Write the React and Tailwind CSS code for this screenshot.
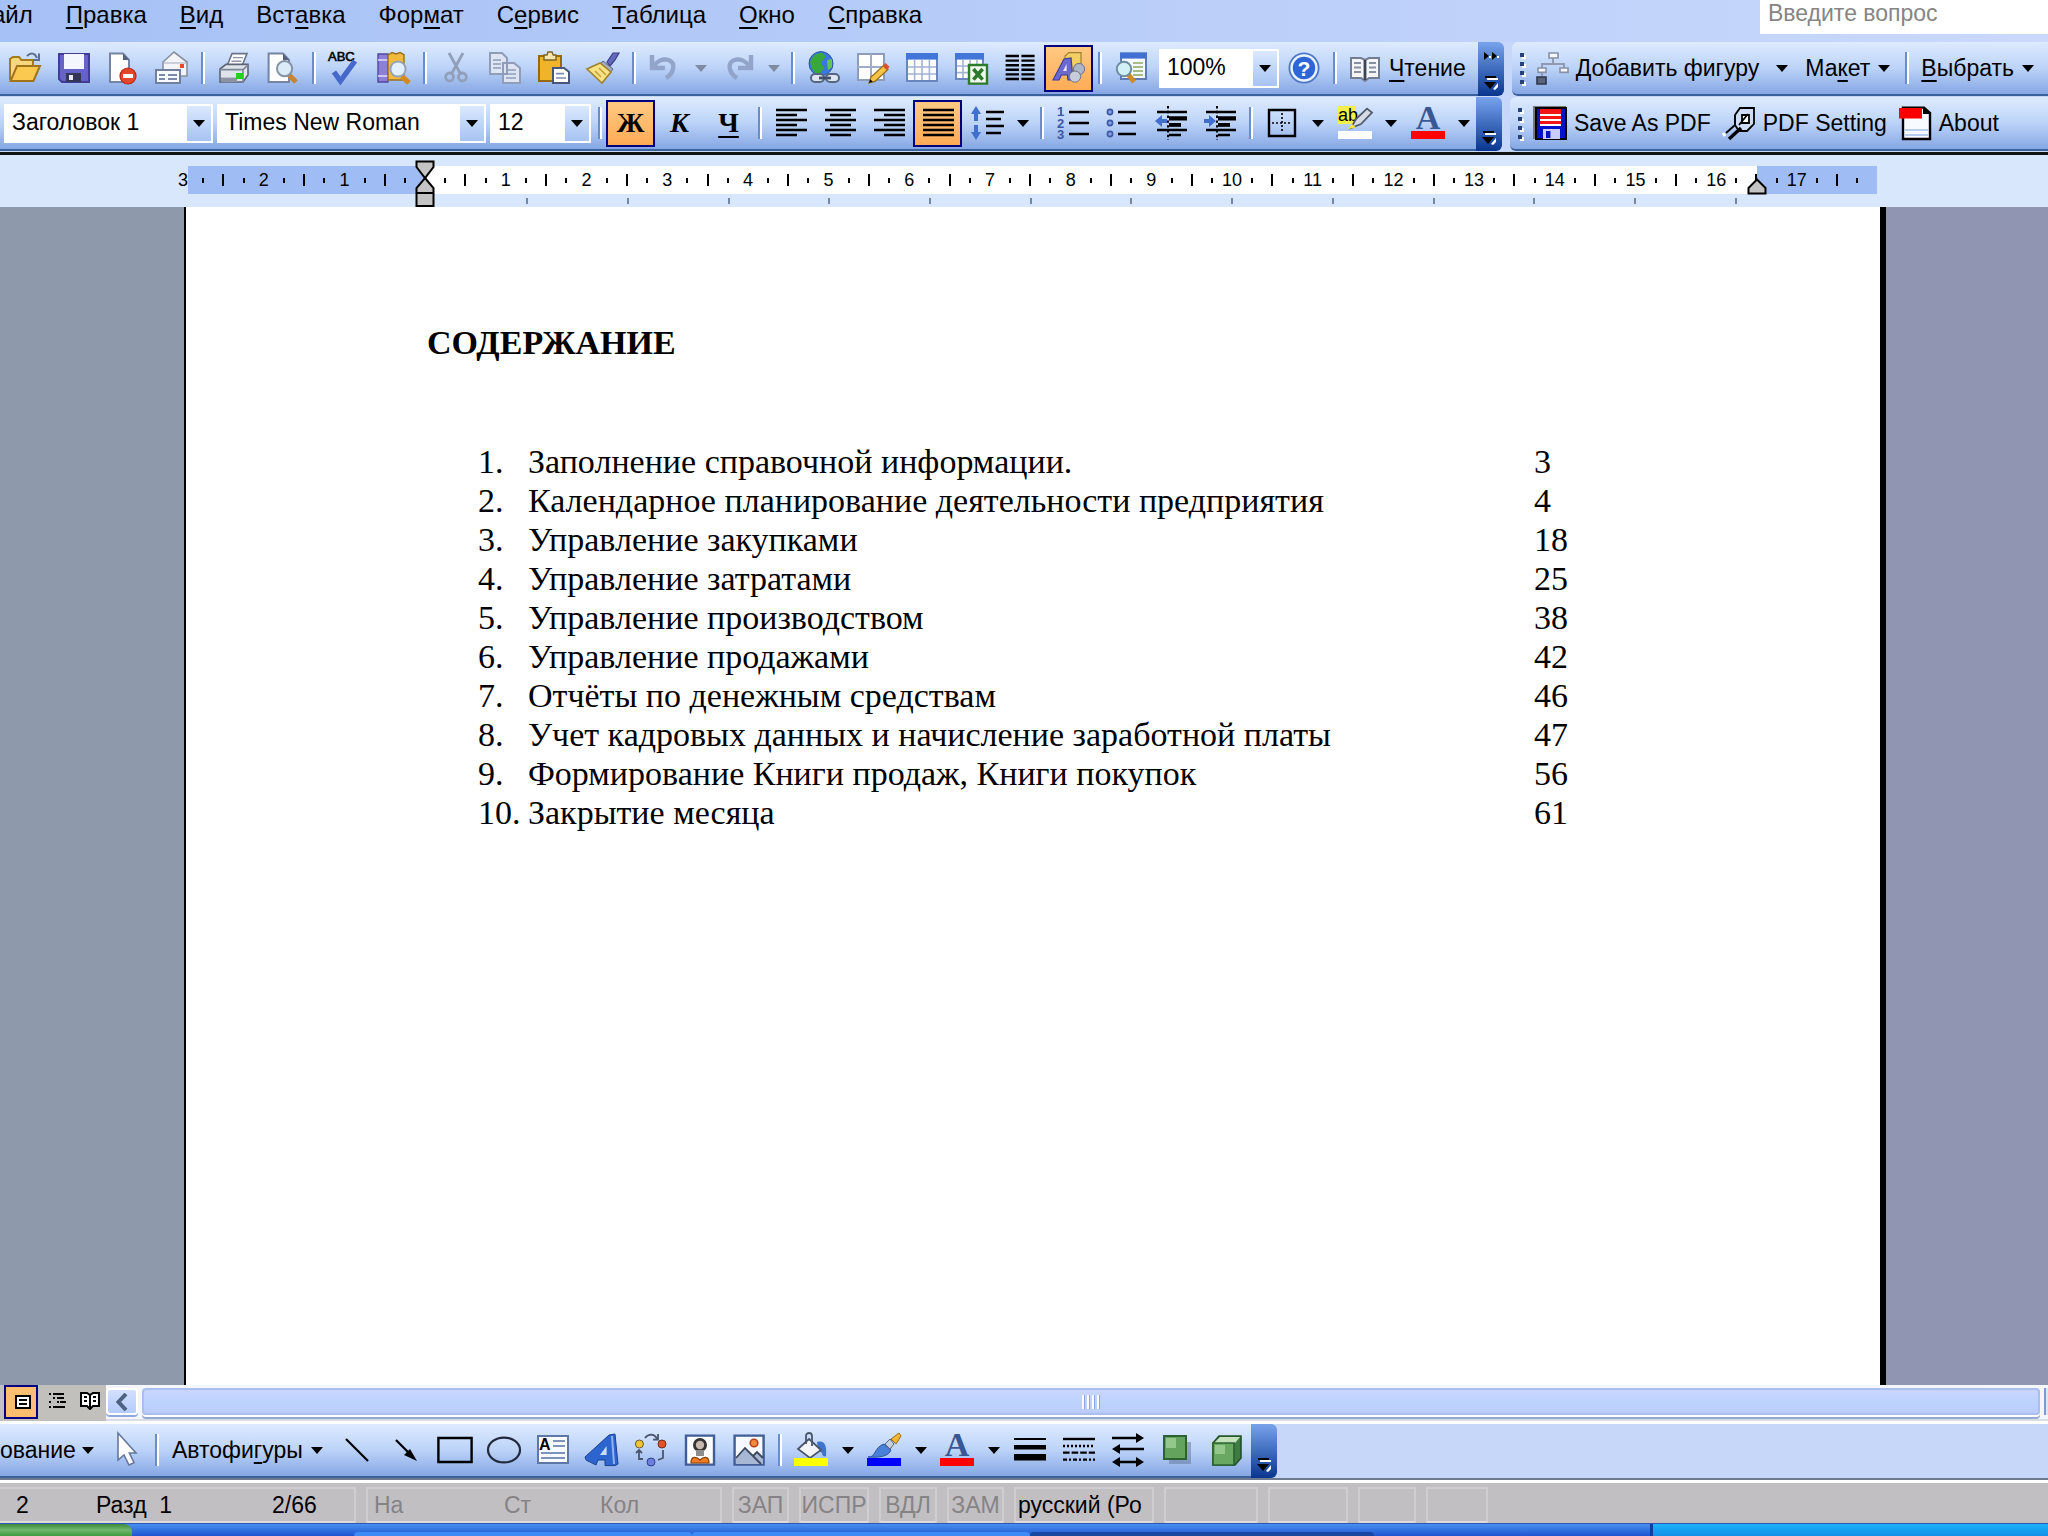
import { useState } from "react";

// all toolbar icons are drawn on a 16x16 grid
const icons = {
  open: (
    <>
      <path d="M.5 14V3.5L2 2.5h3L6.200 4H12v3" fill="#f6d680" stroke="#a57a18" />
      <path d="M.8 14.5 4 7h11.5l-3.300 7.5z" fill="#fbc850" stroke="#a0741a" />
      <path d="M9 2c2-2 4-1.5 5 1M15 .8V4h-3" fill="none" stroke="#5b718f" />
    </>
  ),
  save: (
    <>
      <path d="M.5 1h15v14H2L.5 13.5z" fill="#6663c8" stroke="#403c98" />
      <path d="M3 1h10v7.5H3z" fill="#f4f6fd" />
      <path d="M4 10.5h7.5V15H4z" fill="#333657" />
      <path d="M5.5 11.5h2V14h-2z" fill="#e8eaf5" />
    </>
  ),
  permission: (
    <>
      <path d="M1.5.8H8L11 4v11H1.5z" fill="#fff" stroke="#7584a4" />
      <path d="M8 .8V4h3z" fill="#54617c" />
      <circle cx="10.5" cy="12" r="4" fill="#e4462b" stroke="#b42b16" strokeWidth=".6" />
      <path d="M8 11h5v2H8z" fill="#fff" />
    </>
  ),
  mail: (
    <>
      <path d="M3.5 5 9 0l6.5 5v7h-12z" fill="#f3f4f7" stroke="#8891a2" strokeWidth=".8" />
      <path d="M4 5.5h11" stroke="#b8bfcc" strokeWidth=".7" />
      <path d="M12 6h2v2h-2z" fill="#e8482c" />
      <path d="M0 9h12v6.5H0z" fill="#f7faff" stroke="#6f7f9c" />
      <path d="M1.5 11.5h3M1.5 13.5h3M6 11.5h4.5M6 13.5h4.5" stroke="#7c8aa8" strokeWidth=".9" />
    </>
  ),
  print: (
    <>
      <path d="M4.5 7 7 .8h7.5L12 7z" fill="#fff" stroke="#6b7486" strokeWidth=".8" />
      <path d="M7.5 2.8h5M6.700 4.600h5" stroke="#8b94a5" strokeWidth=".7" />
      <path d="m1 8.5 3-2.3h11v5.3L12.5 15H1z" fill="#dfe3ea" stroke="#5c6576" strokeWidth=".8" />
      <path d="M1 8.8h11.5L15 6.5M12.5 9v6" fill="none" stroke="#7d8697" strokeWidth=".8" />
      <path d="M1.5 12.8h8V15h-8z" fill="#8c93a3" />
      <path d="M9 10.5h3.5v3H9z" fill="#27d01f" />
    </>
  ),
  preview: (
    <>
      <path d="M.8.8H8L11 4v11H.8z" fill="#fff" stroke="#7584a4" />
      <path d="M8 .8V4h3z" fill="#54617c" />
      <path d="M11 11.5 14.5 15" stroke="#c98430" strokeWidth="2.6" />
      <circle cx="8.8" cy="8.3" r="3.8" fill="#dcebf8" stroke="#8492a8" />
    </>
  ),
  spelling: (
    <>
      <text x="-.5" y="4.5" fontSize="6.5" stroke="#000" strokeWidth=".3" fontFamily="Liberation Sans, sans-serif">ABC</text>
      <path d="m2.5 10 3.2 4.5L13 4.5" fill="none" stroke="#4768ca" strokeWidth="2.6" />
    </>
  ),
  research: (
    <>
      <path d="M0 1h5v14H0z" fill="#8c7fd6" stroke="#5147a0" strokeWidth=".7" />
      <path d="M0 4h5M0 12h5" stroke="#e2def7" strokeWidth=".8" />
      <path d="M5 1.5 7 .3 9 1l2-.7 2 1V14H5z" fill="#f1ba3d" stroke="#97711f" strokeWidth=".7" />
      <path d="M12 12.2 15.5 15.5" stroke="#d18b22" strokeWidth="2.6" />
      <circle cx="10" cy="8.5" r="3.8" fill="#e3effa" stroke="#97a3b5" />
    </>
  ),
  cut: (
    <g fill="none" stroke="#929fb8" strokeWidth="1.4">
      <path d="M4.5.5 10 10.5M11.5.5 6 10.5" />
      <circle cx="4.8" cy="12.5" r="2" />
      <circle cx="11.2" cy="12.5" r="2" />
    </g>
  ),
  copy: (
    <g stroke="#8f9db8" fill="#dde5f4">
      <path d="M.5.5h6L9 3v8H.5zM7 5.5h5.5l3 2.5v7.5H7z" />
      <path d="M2 4h4M2 6h4M2 8h4M8.5 9h5M8.5 11h5M8.5 13h5" strokeWidth=".8" />
    </g>
  ),
  paste: (
    <>
      <path d="M.5 2h11v12.5H.5z" fill="#f0b42b" stroke="#96690d" />
      <path d="M3 1.5h1.5L5 0h2l.6 1.5H9V4H3z" fill="#f7e6ab" stroke="#7c6425" strokeWidth=".7" />
      <path d="M7.5 8H13l2.5 2v5.5h-8z" fill="#fff" stroke="#47577c" />
      <path d="M9 10.8h4M9 13h5" stroke="#7d8cab" strokeWidth=".8" />
    </>
  ),
  brush: (
    <>
      <path d="m10 5 3-4.500h3L14 4l-2.500 3z" fill="#6368bd" stroke="#3a3e86" strokeWidth=".6" />
      <path d="m8 4.500 5 4-1.500 2L6.500 6z" fill="#a3acc2" stroke="#5b6480" strokeWidth=".5" />
      <path d="M6.500 5.500 0 8.500l7.500 7L12 10z" fill="#f8e384" stroke="#a0822d" strokeWidth=".8" />
      <path d="m4 9.500 3 3M6 8l3.500 3.500" stroke="#c5a040" strokeWidth=".8" />
    </>
  ),
  undo: <path d="M1.500 1.500v6.500h6.500M2.500 7c3-5 11-4 9.500 1.500-.4 2-1.800 3.500-3.500 4.500" fill="none" stroke="#92a4ca" strokeWidth="2.200" />,
  redo: <path d="M14.500 1.500v6.500H8M13.500 7c-3-5-11-4-9.500 1.500.4 2 1.800 3.500 3.500 4.500" fill="none" stroke="#92a4ca" strokeWidth="2.200" />,
  link: (
    <>
      <circle cx="6.5" cy="5.8" r="6" fill="#3a78dd" stroke="#2a559e" strokeWidth=".5" />
      <path d="M3 1.500 7 .3l2 2-2.500 3L8 8l-2.500 3.500-3-2L1 5z" fill="#39a83c" />
      <path d="m9.500 4 2.500-.5v4L10 9z" fill="#66c653" />
      <rect x="1.5" y="11" width="6.5" height="4" rx="2" fill="#dfe6f2" stroke="#56657f" />
      <rect x="9" y="11" width="6.5" height="4" rx="2" fill="#dfe6f2" stroke="#56657f" />
      <path d="M5.500 13h6" stroke="#414f68" strokeWidth="1.4" />
    </>
  ),
  tableDraw: (
    <>
      <path d="M.5 1h13v13H.5z" fill="#fff" stroke="#8d9cba" />
      <path d="M7 1v13M.5 7.500h13" stroke="#9fadc9" />
      <path d="m6 15.500 1-3 6.500-6 2 2.200-6.500 6z" fill="#f7c344" stroke="#8f6a1a" strokeWidth=".6" />
      <path d="m12.800 7 1.500-1.500 2 2-1.600 1.500z" fill="#d9512f" />
      <path d="m6 15.500.6-1.800 1.300 1.100z" />
    </>
  ),
  table: (
    <>
      <path d="M.5 1h15v13.500H.5z" fill="#fff" stroke="#6a86bf" />
      <path d="M0 .5h16v3.300H0z" fill="#4276d8" />
      <path d="M4.300 4v10M8 4v10M11.700 4v10M1 7.500h14M1 11h14" stroke="#a3b3d2" strokeWidth=".8" />
    </>
  ),
  excel: (
    <>
      <path d="M.5 1h13.500v12.500H.5z" fill="#fff" stroke="#6a86bf" />
      <path d="M0 .5h14.500v3.300H0z" fill="#4276d8" />
      <path d="M4 4v9M7.500 4v9M11 4v9M1 7h13M1 10.300h13" stroke="#a3b3d2" strokeWidth=".8" />
      <path d="M7 6.500h9v9.300H7z" fill="#f1f8ee" stroke="#2c7b2b" strokeWidth="1.2" />
      <path d="m9.200 8.500 4.600 5.300M13.800 8.500l-4.600 5.300" stroke="#2c7b2b" strokeWidth="1.8" />
    </>
  ),
  columns: (
    <path d="M.8 2h6.700M.8 4.300h6.700M.8 6.600h6.700M.8 8.900h6.700M.8 11.200h6.700M.8 13.500h6.700M8.700 2h6.600M8.700 4.300h6.600M8.700 6.600h6.600M8.700 8.900h6.600M8.700 11.200h6.600M8.700 13.500h6.600" stroke="#000" strokeWidth="1.2" />
  ),
  drawing: (
    <>
      <path d="M6 2 8 .3h6v8l-2 2H6z" fill="#f2cf63" stroke="#9d8035" strokeWidth=".6" />
      <path d="M0 14 5.500 3.500 9 3l1 11H7.500l-.3-2.500h-3L3 14z" fill="#6a6ad0" stroke="#3f3d97" strokeWidth=".6" />
      <path d="M5 9.500 6.800 6v3.500z" fill="#e9e5f7" />
      <circle cx="13" cy="8.5" r="2.8" fill="#aeb5c4" stroke="#6c7486" strokeWidth=".5" />
      <circle cx="11" cy="12.3" r="2.8" fill="#c6ccd8" stroke="#6c7486" strokeWidth=".5" />
    </>
  ),
  docMap: (
    <>
      <path d="M3 .8h12.500V13.500H3z" fill="#f4f8ff" stroke="#5f7bb5" />
      <path d="M2.500.3H16v3H2.500z" fill="#3f70d2" />
      <path d="M9 5.500h5M9 7.500h5M9 9.500h5M9 11.500h5" stroke="#8aa860" strokeWidth=".8" />
      <path d="M6.500 11 9.500 15" stroke="#d18b22" strokeWidth="2.4" />
      <circle cx="4.5" cy="8.5" r="3.6" fill="#d1f0f6" stroke="#6d8da3" />
    </>
  ),
  help: (
    <>
      <circle cx="8" cy="8" r="7.3" fill="#e9f2ff" stroke="#4f78c4" strokeWidth=".9" />
      <circle cx="8" cy="8" r="5.6" fill="#2e66d8" />
      <text x="8" y="11.8" fontSize="10.5" fontWeight="700" textAnchor="middle" fill="#fff" fontFamily="Liberation Sans, sans-serif">?</text>
    </>
  ),
  reading: (
    <>
      <path d="M1 3h5l2 1 2-1h5v10h-5l-2 1.500L6 13H1z" fill="#f4f5f8" stroke="#737d91" />
      <path d="M8 4v10" stroke="#3c4354" strokeWidth="1.4" />
      <path d="M2.500 5.500h3.500M2.500 7.700h3.500M2.500 10h3.500M10 5.500h3.500M10 7.700h3.500M10 10h3.500" stroke="#878fa0" />
    </>
  ),
  orgChart: (
    <>
      <path d="M8.500 3v3M3 9V6h11v3M3 9v3" fill="none" stroke="#8f9aae" />
      <path d="M6.500.5h4.500V3H6.500zM1 8h4v2.200H1zM12 8h4v2.200h-4z" fill="#f5f7fb" stroke="#8791a5" strokeWidth=".8" />
      <path d="M.5 12.500h4.500V16H.5z" fill="#59657c" stroke="#2d374b" strokeWidth=".8" />
    </>
  ),
  alignLeft: <path d="M.5 1.500h15.500M.5 4h10.500M.5 6.500h15.500M.5 9h10.500M.5 11.500h15.500M.5 14h10.500" stroke="#000" strokeWidth="1.2" />,
  alignCenter: <path d="M.5 1.500h15.500M3 4h10.500M.5 6.500h15.500M3 9h10.500M.5 11.500h15.500M3 14h10.500" stroke="#000" strokeWidth="1.2" />,
  alignRight: <path d="M.5 1.500h15.500M5.500 4h10.500M.5 6.500h15.500M5.500 9h10.500M.5 11.500h15.500M5.500 14h10.500" stroke="#000" strokeWidth="1.2" />,
  justify: <path d="M.5 1.500h15.500M.5 4h15.500M.5 6.500h15.500M.5 9h15.500M.5 11.500h15.500M.5 14h15.500" stroke="#000" strokeWidth="1.2" />,
  spacing: (
    <>
      <path d="M2.500-.5 5 3.500H3.500V7h-2V3.500H0zM2.500 16.500 5 12.500H3.500V9h-2v3.500H0z" fill="#416fce" />
      <path d="M7.500 2.500h9M7.500 6h7.500M7.500 9.500h9M7.500 13h7.500" stroke="#000" strokeWidth="1.2" />
    </>
  ),
  numbered: (
    <>
      <g fontSize="6.5" fontWeight="700" fill="#3b57a8" fontFamily="Liberation Sans, sans-serif">
        <text x="0" y="4.5">1</text>
        <text x="0" y="10.3">2</text>
        <text x="0" y="16">3</text>
      </g>
      <path d="M6 2.500h10M6 8h10M6 13.500h10" stroke="#000" strokeWidth="1.2" />
    </>
  ),
  bullets: (
    <>
      <g fill="#8ba3dd" stroke="#3b57a8" strokeWidth=".8">
        <circle cx="2" cy="2.5" r="1.3" />
        <circle cx="2" cy="8" r="1.3" />
        <circle cx="2" cy="13.5" r="1.3" />
      </g>
      <path d="M6 2.500h9M6 8h9M6 13.500h9" stroke="#000" strokeWidth="1.2" />
    </>
  ),
  outdent: (
    <>
      <path d="M1 2.500h15M7 5.200h9M7 9.300h6M1 11.500h15M7 14h6" stroke="#000" strokeWidth="1.2" />
      <path d="M7 5h9v1.800H7zM7 8h6v1.600H7z" />
      <path d="M6.500-.5v17" stroke="#000" strokeDasharray="1.2 1.2" />
      <path d="m0 7 3.500-3v2H6v2H3.500v2z" fill="#416fce" />
    </>
  ),
  indent: (
    <>
      <path d="M1 2.500h15M7 5.200h9M7 9.300h6M1 11.500h15M7 14h6" stroke="#000" strokeWidth="1.2" />
      <path d="M7 5h9v1.800H7zM7 8h6v1.600H7z" />
      <path d="M6.500-.5v17" stroke="#000" strokeDasharray="1.2 1.2" />
      <path d="M6 7 2.500 4v2H0v2h2.500v2z" fill="#416fce" />
    </>
  ),
  borders: (
    <>
      <path d="M1.500 1.500h13v13h-13z" fill="none" stroke="#000" strokeWidth="1.2" />
      <path d="M8 3v10M3 8h10" stroke="#000" strokeWidth=".8" strokeDasharray="1 1" />
    </>
  ),
  highlight: (
    <>
      <path d="M-.5-.5h9v9h-9z" fill="#f4ee4b" />
      <text x="-.5" y="7" fontSize="9" fontFamily="Liberation Sans, sans-serif">ab</text>
      <path d="M6 10.500 8.500 6 14 .8l2.500 2L11 8.500z" fill="#d6dbe4" stroke="#505a6c" strokeWidth=".9" />
      <path d="m4.500 11 2-2.500 2 1.700z" fill="#f4e53c" />
      <path d="M-.5 12h17v4h-17z" fill="#fff" />
    </>
  ),
  fontColor: (
    <>
      <text x="8" y="11" fontSize="17" fontWeight="700" textAnchor="middle" fill="#3a5795" fontFamily="Liberation Serif, serif">A</text>
      <path d="M-.5 12h17v4h-17z" fill="#f00" />
    </>
  ),
  savePdf: (
    <>
      <path d="M-.5-.5H16V16H-.5z" fill="#777" />
      <path d="M1 .5h15V16H1z" fill="#0011c8" stroke="#000" />
      <path d="M3 1h10.500v7.500H3z" fill="#f01414" />
      <path d="M3 4h10.500M3 6.500h10.500M3 9h10.500" stroke="#fff" />
      <path d="M4.500 11h8.500v5H4.500z" fill="#c9cdf5" />
      <path d="M6 12h2.200v3.500H6z" fill="#0011c8" />
    </>
  ),
  pdfSetting: (
    <>
      <path d="M6 4 8.500.5h7v8L12 12H8L6 9z" fill="#cddcf4" stroke="#000" strokeWidth=".9" />
      <path d="M9.500 4h3.500v4H9.500z" fill="#fff" stroke="#000" strokeWidth=".9" />
      <path d="M12.500 3.500 8 9M6 4v5L1.500 13" fill="none" stroke="#000" strokeWidth=".9" />
      <path d="M9 10.500 3 16" stroke="#000" strokeWidth="1.7" />
      <path d="m0 13 1 1.500" stroke="#fff" strokeWidth="1.5" />
    </>
  ),
  about: (
    <>
      <path d="M2 .3h10.500L15.500 3v13H2z" fill="#f7faff" stroke="#000" strokeWidth="1.2" />
      <path d="M12 .3V3.500h3.500z" />
      <path d="M0 .5h11.500v5.300H0z" fill="#fb0000" />
      <path d="M3 11.500h11.500M3 14h11.500" stroke="#b9cdf0" />
    </>
  ),
  cursor: (
    <path d="M4-.5v13.500l3-2.500 2.500 5 2.500-1.200-2.300-4.800H13z" fill="#fff" stroke="#65779c" strokeWidth=".8" />
  ),
  line: <path d="m2.500 2.500 11 11" stroke="#000" strokeWidth="1.1" />,
  arrow: (
    <>
      <path d="m3 3 6 6" stroke="#000" strokeWidth="1.1" />
      <path d="m13.500 13.500-6.500-3L10 7.500z" />
    </>
  ),
  rect: <path d="M-.3 2h16.600v12H-.3z" fill="none" stroke="#000" strokeWidth="1.2" />,
  ellipse: <ellipse cx="8" cy="8" rx="8" ry="6.2" fill="none" stroke="#222b3d" strokeWidth="1.1" />,
  textBox: (
    <>
      <path d="M.5 1h15v13.500H.5z" fill="#f7faff" stroke="#5f77a5" />
      <text x="1" y="8" fontSize="8" fontWeight="700" fontFamily="Liberation Sans, sans-serif">A</text>
      <path d="M8 3.500h6M8 6h6M2 9.500h12M2 12h12" stroke="#7e92bd" strokeWidth=".9" />
    </>
  ),
  wordArt: (
    <>
      <path d="M-.5 11.500 11.500.5 14.500 0l1.500 15-1.500.8H9.500V13H6l-1 2.500L0 13z" fill="#2c65cf" stroke="#1c438e" strokeWidth=".5" />
      <path d="M7 10.500 10.300 6v4.500z" fill="#c8dcfa" />
      <path d="m13 1 1 14" stroke="#8fb4f2" />
    </>
  ),
  diagram: (
    <>
      <path d="M5 2c2-2.500 5-2 6 .5M11.500 0v2.800H9M2 8v4.500h2M14 8v4l-2.500 1M.5 9.500 2 8l1.500 1.500" fill="none" stroke="#4a566e" strokeWidth=".9" />
      <circle cx="2.2" cy="5" r="2" fill="#f0c536" stroke="#6a5a1f" strokeWidth=".5" />
      <circle cx="13.5" cy="5" r="2" fill="#e0512e" stroke="#7a2c1a" strokeWidth=".5" />
      <circle cx="8" cy="14" r="2" fill="#6c7fdd" stroke="#323f8a" strokeWidth=".5" />
    </>
  ),
  clipArt: (
    <>
      <path d="M1 .8h14v14.500H1z" fill="#fff" stroke="#405d97" strokeWidth="1.2" />
      <circle cx="8" cy="5.500" r="2.8" fill="#c5b8ad" stroke="#333" strokeWidth="1.4" />
      <path d="M6 8h4v3H6z" fill="#8d8d8d" />
      <path d="M3.500 14.500c0-4 3-3 4.500-1.500 1.500-1.500 4.500-2.500 4.500 1.500z" fill="#ee7d24" stroke="#8e3e08" strokeWidth=".6" />
    </>
  ),
  picture: (
    <>
      <path d="M.8.8h14.500v14.500H.8z" fill="#f6f9ff" stroke="#405d97" strokeWidth="1.2" />
      <path d="m1.500 12 4.500-5 4 4 2-2 3 3v3H1.500z" fill="#a8b7d4" />
      <path d="m1.500 12 4.500-5 8 8M10 11l2-2 3 3" fill="none" stroke="#3d465a" strokeWidth=".9" />
      <circle cx="10.5" cy="4.5" r="1.9" fill="#f18a3c" stroke="#b4421b" strokeWidth=".8" />
    </>
  ),
  bucket: (
    <>
      <path d="M11 4c4-1 5 2 4.500 7-1 .5-2 0-2-1.500L11.500 8z" fill="#3f74cf" />
      <path d="m7 2.500 6 5.500-5.500 4L1.500 7.500z" fill="#f2f4f8" stroke="#4b566b" strokeWidth=".9" />
      <path d="M5.500 5V1c0-2 3-2 3 0v5" fill="none" stroke="#4b566b" strokeWidth=".9" />
      <path d="M-.5 12h17v4h-17z" fill="#ff0" />
    </>
  ),
  paint: (
    <>
      <path d="M0 11.500C4 12 3 6.500 8 5l3.500 3C10.500 11 6 12 0 11.500z" fill="#4a80d8" stroke="#2e569f" strokeWidth=".5" />
      <path d="M8.500 5 11 2.500 13 5l-2 2.500z" fill="#c5cfe0" stroke="#59657d" strokeWidth=".5" />
      <path d="m11.500 2.500 4-3 1 1.500-2.500 4z" fill="#f2b632" stroke="#946c16" strokeWidth=".5" />
      <path d="M-.5 12h17v4h-17z" fill="#00f" />
    </>
  ),
  lineStyle: <path d="M0 2h16v1H0zM0 5.500h16v2.200H0zM0 10h16v3.200H0z" />,
  dashStyle: (
    <g stroke="#000" strokeWidth="1.2">
      <path d="M0 2.500h16" />
      <path d="M0 6h16" strokeDasharray="1 1" />
      <path d="M0 9.300h16" strokeDasharray="3.3 1" />
      <path d="M0 12.800h16" strokeDasharray="2 1 1 1" />
    </g>
  ),
  arrowStyle: (
    <>
      <path d="M0 2h13M3 7.500h13M3 14h10" stroke="#000" strokeWidth="1.2" />
      <path d="m16 2-4-2.500v5zM0 7.500 4 5v5zM0 14l4-2.500v5zM16 14l-4-2.500v5z" />
    </>
  ),
  shadow: (
    <>
      <path d="M4 4h11v11H4z" fill="#5e7298" opacity=".5" />
      <path d="M1.500 1h11v11.500h-11z" fill="#64a35e" stroke="#2c6130" />
      <path d="M2.500 2h5v5h-5z" fill="#93c78b" />
    </>
  ),
  cube: (
    <>
      <path d="m1.500 4.500 3-3.500h11v11l-3 3.500h-11z" fill="#3f7c43" stroke="#24512a" strokeWidth=".8" />
      <path d="m2 4.500 3-3h10l-2.500 3z" fill="#c4e3bd" />
      <path d="M1.500 4.500h10.500v11H1.500z" fill="#68a862" stroke="#2c6130" strokeWidth=".8" />
      <path d="M2.500 5.500h5V10h-5z" fill="#94c88b" />
    </>
  ),
};

const standardIcons = ["open", "save", "permission", "mail", "|", "print", "preview", "|", "spelling", "research", "|", "cut", "copy", "paste", "brush", "|", "undo", "v-", "redo", "v-", "|", "link", "tableDraw", "table", "excel", "columns", "drawing", "|", "docMap"];
const formatIcons = ["|", "alignLeft", "alignCenter", "alignRight", "justify", "spacing", "v", "|", "numbered", "bullets", "outdent", "indent", "|", "borders", "v", "highlight", "v", "fontColor", "v"];
const drawIcons = ["line", "arrow", "rect", "ellipse", "textBox", "wordArt", "diagram", "clipArt", "picture", "|", "bucket", "v", "paint", "v", "fontColor", "v", "lineStyle", "dashStyle", "arrowStyle", "shadow", "cube"];

// [before, underlined letter, after]
const menus = [
  ["", "П", "равка"],
  ["", "В", "ид"],
  ["Вст", "а", "вка"],
  ["Фор", "м", "ат"],
  ["С", "е", "рвис"],
  ["", "Т", "аблица"],
  ["", "О", "кно"],
  ["", "С", "правка"],
];

const contents = [
  ["Заполнение справочной информации.", 3],
  ["Календарное планирование деятельности предприятия", 4],
  ["Управление закупками", 18],
  ["Управление затратами", 25],
  ["Управление производством", 38],
  ["Управление продажами", 42],
  ["Отчёты по денежным средствам", 46],
  ["Учет кадровых данных и начисление заработной платы", 47],
  ["Формирование Книги продаж, Книги покупок", 56],
  ["Закрытие месяца", 61],
];

function Icon({ name }) {
  return (
    <svg viewBox="0 0 16 16" className="h-8 w-8 shrink-0 overflow-visible" aria-hidden="true">
      {icons[name]}
    </svg>
  );
}

function Caret({ muted }) {
  return (
    <svg viewBox="0 0 12 7" className={`h-[7px] w-3 shrink-0 ${muted ? "fill-[#7f8ba3]" : "fill-black"}`} aria-hidden="true">
      <path d="M0 0h12L6 7z" />
    </svg>
  );
}

function Separator() {
  return (
    <div className="flex w-[13px] shrink-0 justify-center">
      <div className="h-8 w-1 border-l-2 border-r-2 border-l-[#6a8ccb] border-r-white" />
    </div>
  );
}

function ToolButton({ label, active, onClick, children }) {
  return (
    <button
      type="button"
      aria-label={label}
      aria-pressed={active}
      onClick={onClick}
      className={`flex h-[47px] w-[49px] shrink-0 items-center justify-center ${
        active ? "border-2 border-[#000080] bg-linear-to-b from-[#ffc982] to-[#ffab55]" : ""
      }`}
    >
      {children}
    </button>
  );
}

function ToolIcons({ items }) {
  const [pressed, setPressed] = useState(["drawing", "justify"]);

  const toggle = (name) => {
    setPressed(
      pressed.includes(name)
        ? pressed.filter((item) => item !== name)
        : [...pressed, name]
    );
  };

  return items.map((name, i) => {
    if (name === "|") return <Separator key={i} />;
    if (name === "v" || name === "v-") {
      return (
        <button key={i} type="button" aria-label="more" className="flex w-6 shrink-0 justify-center">
          <Caret muted={name === "v-"} />
        </button>
      );
    }
    return (
      <ToolButton key={i} label={name} active={pressed.includes(name)} onClick={() => toggle(name)}>
        <Icon name={name} />
      </ToolButton>
    );
  });
}

function Combo({ label, value, className }) {
  return (
    <div className={`flex h-[39px] shrink-0 border-2 border-white bg-white ${className}`}>
      <select
        aria-label={label}
        defaultValue={value}
        className="min-w-0 flex-1 appearance-none pb-1 pl-1.5 outline-none"
      >
        <option>{value}</option>
      </select>
      <div className="flex w-6 items-center justify-center bg-linear-to-b from-[#dbe9fd] to-[#a7c3f2]">
        <Caret />
      </div>
    </div>
  );
}

function Grip() {
  return (
    <div className="flex shrink-0 flex-col gap-[5px] pr-3 pl-2">
      {[0, 1, 2, 3].map((i) => (
        <div key={i} className="size-1 bg-[#27417a] shadow-[2px_2px_0_#fff]" />
      ))}
    </div>
  );
}

function EndCap({ chevrons }) {
  return (
    <button
      type="button"
      aria-label="toolbar options"
      className="flex h-full w-[26px] shrink-0 flex-col items-center justify-between rounded-r-md bg-linear-to-b from-[#78a3ec] to-[#08358f] pt-2.5 pb-1.5"
    >
      <svg viewBox="0 0 16 8" className={`h-2 w-4 ${chevrons ? "" : "invisible"}`} aria-hidden="true">
        <path d="M1 0v8l5-4zM9 0v8l5-4z" />
        <path d="M6 4h2v2H6zM14 4h2v2h-2z" fill="#fff" />
      </svg>
      <svg viewBox="0 0 14 14" className="size-3.5" aria-hidden="true">
        <path d="M3 2h11v2H3zM9 13l5-6v4l-3 3z" fill="#fff" />
        <path d="M1 0h11v2H1zM0 6h12l-6 7z" />
      </svg>
    </button>
  );
}

function TextButton({ icon, before, hot, after, caret, className = "" }) {
  return (
    <button type="button" className={`flex shrink-0 items-center whitespace-nowrap ${className}`}>
      {icon && <Icon name={icon} />}
      <span>
        {before}
        {hot && <u className="underline-offset-4">{hot}</u>}
        {after}
      </span>
      {caret && <Caret />}
    </button>
  );
}

const toolbar =
  "flex h-[54px] items-center border-b-2 border-[#3b619c] bg-linear-to-b from-[#deebfe] via-[#bcd3f8] to-[#86a7e4]";

function Toolbars() {
  const [bold, setBold] = useState(true);

  return (
    <div className="flex flex-col gap-px bg-[#c6d7fa] pb-px text-[23px] leading-8">
      <div className="flex gap-2">
        <div className="flex shrink-0">
          <div className={toolbar}>
            <ToolIcons items={standardIcons} />
            <Combo label="Масштаб" value="100%" className="ml-1 w-[120px]" />
            <ToolIcons items={["help", "|"]} />
            <TextButton icon="reading" hot="Ч" after="тение" className="gap-2 pr-3 pl-2" />
          </div>
          <EndCap chevrons />
        </div>
        <div className={`${toolbar} min-w-0 flex-1 overflow-hidden rounded-l-md`}>
          <Grip />
          <TextButton icon="orgChart" hot="Д" after="обавить фигуру" className="gap-2" />
          <TextButton caret className="px-[17px]" />
          <TextButton before="Ма" hot="к" after="ет" caret className="gap-2 pr-2.5" />
          <Separator />
          <TextButton hot="В" after="ыбрать" caret className="gap-2 pl-2" />
        </div>
      </div>
      <div className="flex gap-2">
        <div className="flex shrink-0">
          <div className={toolbar}>
            <Combo label="Стиль" value="Заголовок 1" className="ml-1 w-[209px]" />
            <Combo label="Шрифт" value="Times New Roman" className="ml-1 w-[269px]" />
            <Combo label="Размер" value="12" className="mr-0.5 ml-1 w-[101px]" />
            <Separator />
            <div className="flex font-['Liberation_Serif',serif] text-[28px] font-bold">
              <ToolButton label="Полужирный" active={bold} onClick={() => setBold(!bold)}>
                Ж
              </ToolButton>
              <ToolButton label="Курсив">
                <i>К</i>
              </ToolButton>
              <ToolButton label="Подчеркнутый">
                <u className="underline-offset-4">Ч</u>
              </ToolButton>
            </div>
            <ToolIcons items={formatIcons} />
          </div>
          <EndCap />
        </div>
        <div className={`${toolbar} min-w-0 flex-1 overflow-hidden rounded-l-md`}>
          <Grip />
          <TextButton icon="savePdf" after="Save As PDF" className="gap-2 pr-3" />
          <TextButton icon="pdfSetting" after="PDF Setting" className="gap-2 pr-3" />
          <TextButton icon="about" after="About" className="gap-2" />
        </div>
      </div>
    </div>
  );
}

// quarter-centimetre marks, from 3 cm left of the margin to 17.75 cm right of it
const marks = Array.from({ length: 84 }, (_, i) => i - 12);

function Ruler() {
  return (
    <div className="relative overflow-hidden border-t-3 border-[#111] bg-[#d8e7fc] pt-[11px]">
      <div className="ml-[188px] h-7 w-[1689px] bg-[linear-gradient(to_right,#9fbdf4_237px,#fff_237px,#fff_1569px,#9fbdf4_1569px)]">
        <div className="-ml-[15px] flex h-full w-[1694px] items-center text-[18px] leading-7">
          {marks.map((m) => (
            <div key={m} className="flex w-0 flex-1 justify-center">
              {m === 0 ? null : m % 4 === 0 ? (
                <span>{Math.abs(m / 4)}</span>
              ) : m % 2 === 0 ? (
                <div className="h-3 w-0.5 bg-black" />
              ) : (
                <div className="h-[5px] w-0.5 bg-black" />
              )}
            </div>
          ))}
        </div>
      </div>
      <div className="ml-[477px] flex h-[13px] w-[1309px] items-center">
        {Array.from({ length: 13 }, (_, i) => (
          <div key={i} className="flex flex-1 justify-center">
            <div className="h-1.5 w-0.5 bg-[#7388a8]" />
          </div>
        ))}
      </div>
      <svg viewBox="0 0 20 48" className="absolute top-[5px] left-[415px] h-12 w-5" aria-hidden="true">
        <g fill="#c4c4c4" stroke="#000" strokeWidth="2">
          <path d="M1.500 1.500h17V7l-8.500 11L1.500 7z" />
          <path d="M10 18 18.500 28v5h-17v-5zM1.500 33h17v13h-17z" />
        </g>
      </svg>
      <svg viewBox="0 0 20 17" className="absolute top-[23px] left-[1747px] h-[17px] w-5" aria-hidden="true">
        <path d="M10 1.500 18.500 10v5.500h-17V10z" fill="#c4c4c4" stroke="#000" strokeWidth="2" />
      </svg>
    </div>
  );
}

function Document() {
  return (
    <main className="flex flex-1 bg-linear-to-r from-[#8e9aab] to-[#9095b2]">
      <article className="ml-[184px] w-[1702px] border-r-6 border-l-2 border-black bg-white pt-[116px] pl-[241px] font-['Liberation_Serif',serif] text-[34px] leading-[39px]">
        <h1 className="font-bold">СОДЕРЖАНИЕ</h1>
        <ol className="pt-20 pl-[51px]">
          {contents.map(([title, page], i) => (
            <li key={title} className="flex">
              <span className="w-[50px]">{i + 1}.</span>
              <span className="w-[1006px]">{title}</span>
              <span>{page}</span>
            </li>
          ))}
        </ol>
      </article>
    </main>
  );
}

function ScrollRow() {
  return (
    <div className="flex h-9 bg-[#c2c0bd]">
      <div className="flex items-start pl-1">
        <button type="button" aria-label="Разметка" className="mr-1 flex h-[34px] w-[34px] items-center justify-center border-2 border-[#000080] bg-[#fdbf6f] pl-1">
          <svg viewBox="0 0 16 14" className="h-3.5 w-4">
            <path d="M1 1h14v12H1z" fill="#fff" stroke="#000" strokeWidth="2" />
            <path d="M4 5h8M4 9h8" stroke="#000" strokeWidth="2" />
          </svg>
        </button>
        <button type="button" aria-label="Структура" className="flex h-8 w-8 items-center justify-center">
          <svg viewBox="0 0 18 16" className="h-4 w-[18px]">
            <path d="M0 1h2M4 1h11M4 5h2M8 5h7M8 9h2M11 9h6M0 9h2M4 14h12M0 14h2" stroke="#000" strokeWidth="2" />
          </svg>
        </button>
        <button type="button" aria-label="Чтение" className="flex h-8 w-8 items-center justify-center">
          <svg viewBox="0 0 20 18" className="h-[18px] w-5">
            <path d="M1 1h6l3 2 3-2h6v13h-6l-3 3-3-3H1z" fill="#fff" stroke="#000" strokeWidth="2" />
            <path d="M10 3v14M4 5h3M4 9h3M13 5h3M13 9h3" stroke="#000" strokeWidth="2" />
          </svg>
        </button>
      </div>
      <div className="flex min-w-0 flex-1 gap-1 border-b-2 border-[#d9dde6] bg-[#f4f6fb] pt-[3px] pb-1">
        <button type="button" aria-label="Влево" className="flex w-8 items-center justify-center rounded-sm border-2 border-white bg-linear-to-b from-[#d3e0fd] to-[#b4cbfb] shadow-[0_2px_0_#8fa9dc]">
          <svg viewBox="0 0 12 18" className="h-[18px] w-3">
            <path d="M10 1 2.500 9l7.500 8" fill="none" stroke="#4d6185" strokeWidth="4" />
          </svg>
        </button>
        <div className="flex flex-1 items-center justify-center gap-0.5 rounded-sm border-2 border-[#a9bfee] bg-linear-to-b from-[#cad5ff] via-[#bdd3fc] to-[#bccbff] shadow-[0_2px_0_#fff,0_4px_0_#93a9d3]">
          {[0, 1, 2, 3].map((i) => (
            <div key={i} className="h-3.5 w-[3px] border-r border-[#8ca6e0] bg-white" />
          ))}
        </div>
        <div className="w-1 border-l-2 border-[#7d9ad6] bg-[#dbe6fd]" />
      </div>
    </div>
  );
}

function DrawToolbar() {
  return (
    <div className="flex h-[59px] border-t-3 border-b-2 border-t-white border-b-[#6f7a8f] bg-[#c6d7fa] text-[23px] leading-8">
      <div className={`${toolbar} shrink-0`}>
        <TextButton after="ование" caret className="gap-1.5 pr-2" />
        <ToolIcons items={["cursor", "|"]} />
        <TextButton before="Автофи" hot="г" after="уры" caret className="gap-2 pr-2.5 pl-2" />
        <ToolIcons items={drawIcons} />
      </div>
      <div className="h-[54px]">
        <EndCap />
      </div>
    </div>
  );
}

function StatusBar() {
  const cell = "flex h-9 shrink-0 items-center border-2 border-b-[#dddbdc] border-[#cfcdd0] whitespace-pre";
  return (
    <footer className="flex gap-2.5 border-t-3 border-white bg-[#c2bfc2] pt-1 text-[23px] leading-8">
      <div className={`${cell} w-[356px] border-l-0`}>
        <span className="w-20 pl-4">2</span>
        <span className="w-[176px] pl-4">Разд  1</span>
        <span className="pl-4">2/66</span>
      </div>
      <div className={`${cell} w-[356px] text-[#858385]`}>
        <span className="w-[130px] pl-1.5">На</span>
        <span className="w-24 pl-1.5">Ст</span>
        <span className="pl-1.5">Кол</span>
      </div>
      <div className={`${cell} w-[57px] justify-center text-[#858385]`}>ЗАП</div>
      <div className={`${cell} w-[70px] justify-center text-[#858385]`}>ИСПР</div>
      <div className={`${cell} w-[58px] justify-center text-[#858385]`}>ВДЛ</div>
      <div className={`${cell} w-[57px] justify-center text-[#858385]`}>ЗАМ</div>
      <div className={`${cell} w-[140px] pl-0.5`}>русский (Ро</div>
      <div className={`${cell} w-[94px]`} />
      <div className={`${cell} w-20`} />
      <div className={`${cell} w-[58px]`} />
      <div className={`${cell} w-[62px]`} />
    </footer>
  );
}

function Taskbar() {
  return (
    <div className="flex h-[13px] border-t border-[#2a57b5] bg-linear-to-b from-[#4a8ef0] to-[#1f55d0]">
      <div className="w-[132px] rounded-tr-lg bg-linear-to-b from-[#3d8a3d] via-[#6fb86c] to-[#3f9a3e]" />
      <div className="w-[222px]" />
      <div className="mt-2 w-[338px] rounded-t-sm bg-[#3f8bf5]" />
      <div className="mt-2 w-[338px] rounded-t-sm bg-[#3f8bf5]" />
      <div className="mt-2 w-[344px] rounded-t-sm bg-[#1a479f]" />
      <div className="ml-[276px] flex-1 border-l-3 border-[#0d3f9c] bg-linear-to-b from-[#1cb2fb] to-[#1290e6]" />
    </div>
  );
}

export default function App() {
  return (
    <div className="flex min-h-screen flex-col overflow-hidden bg-white font-['Liberation_Sans',Arial,sans-serif] text-black">
      <header className="flex h-[42px] items-start justify-between bg-linear-to-r from-[#a6c1f6] to-[#c9d8fb]">
        <nav className="-ml-2 flex gap-[33px] text-[24px] leading-[30px]">
          <a href="#">айл</a>
          {menus.map(([before, hot, after]) => (
            <a key={before + hot + after} href="#">
              {before}
              <u className="underline-offset-4">{hot}</u>
              {after}
            </a>
          ))}
        </nav>
        <input
          aria-label="Введите вопрос"
          placeholder="Введите вопрос"
          className="h-[34px] w-72 bg-white pb-2 pl-2 text-[23px] placeholder:text-[#858585]"
        />
      </header>
      <Toolbars />
      <Ruler />
      <Document />
      <ScrollRow />
      <DrawToolbar />
      <StatusBar />
      <Taskbar />
    </div>
  );
}
